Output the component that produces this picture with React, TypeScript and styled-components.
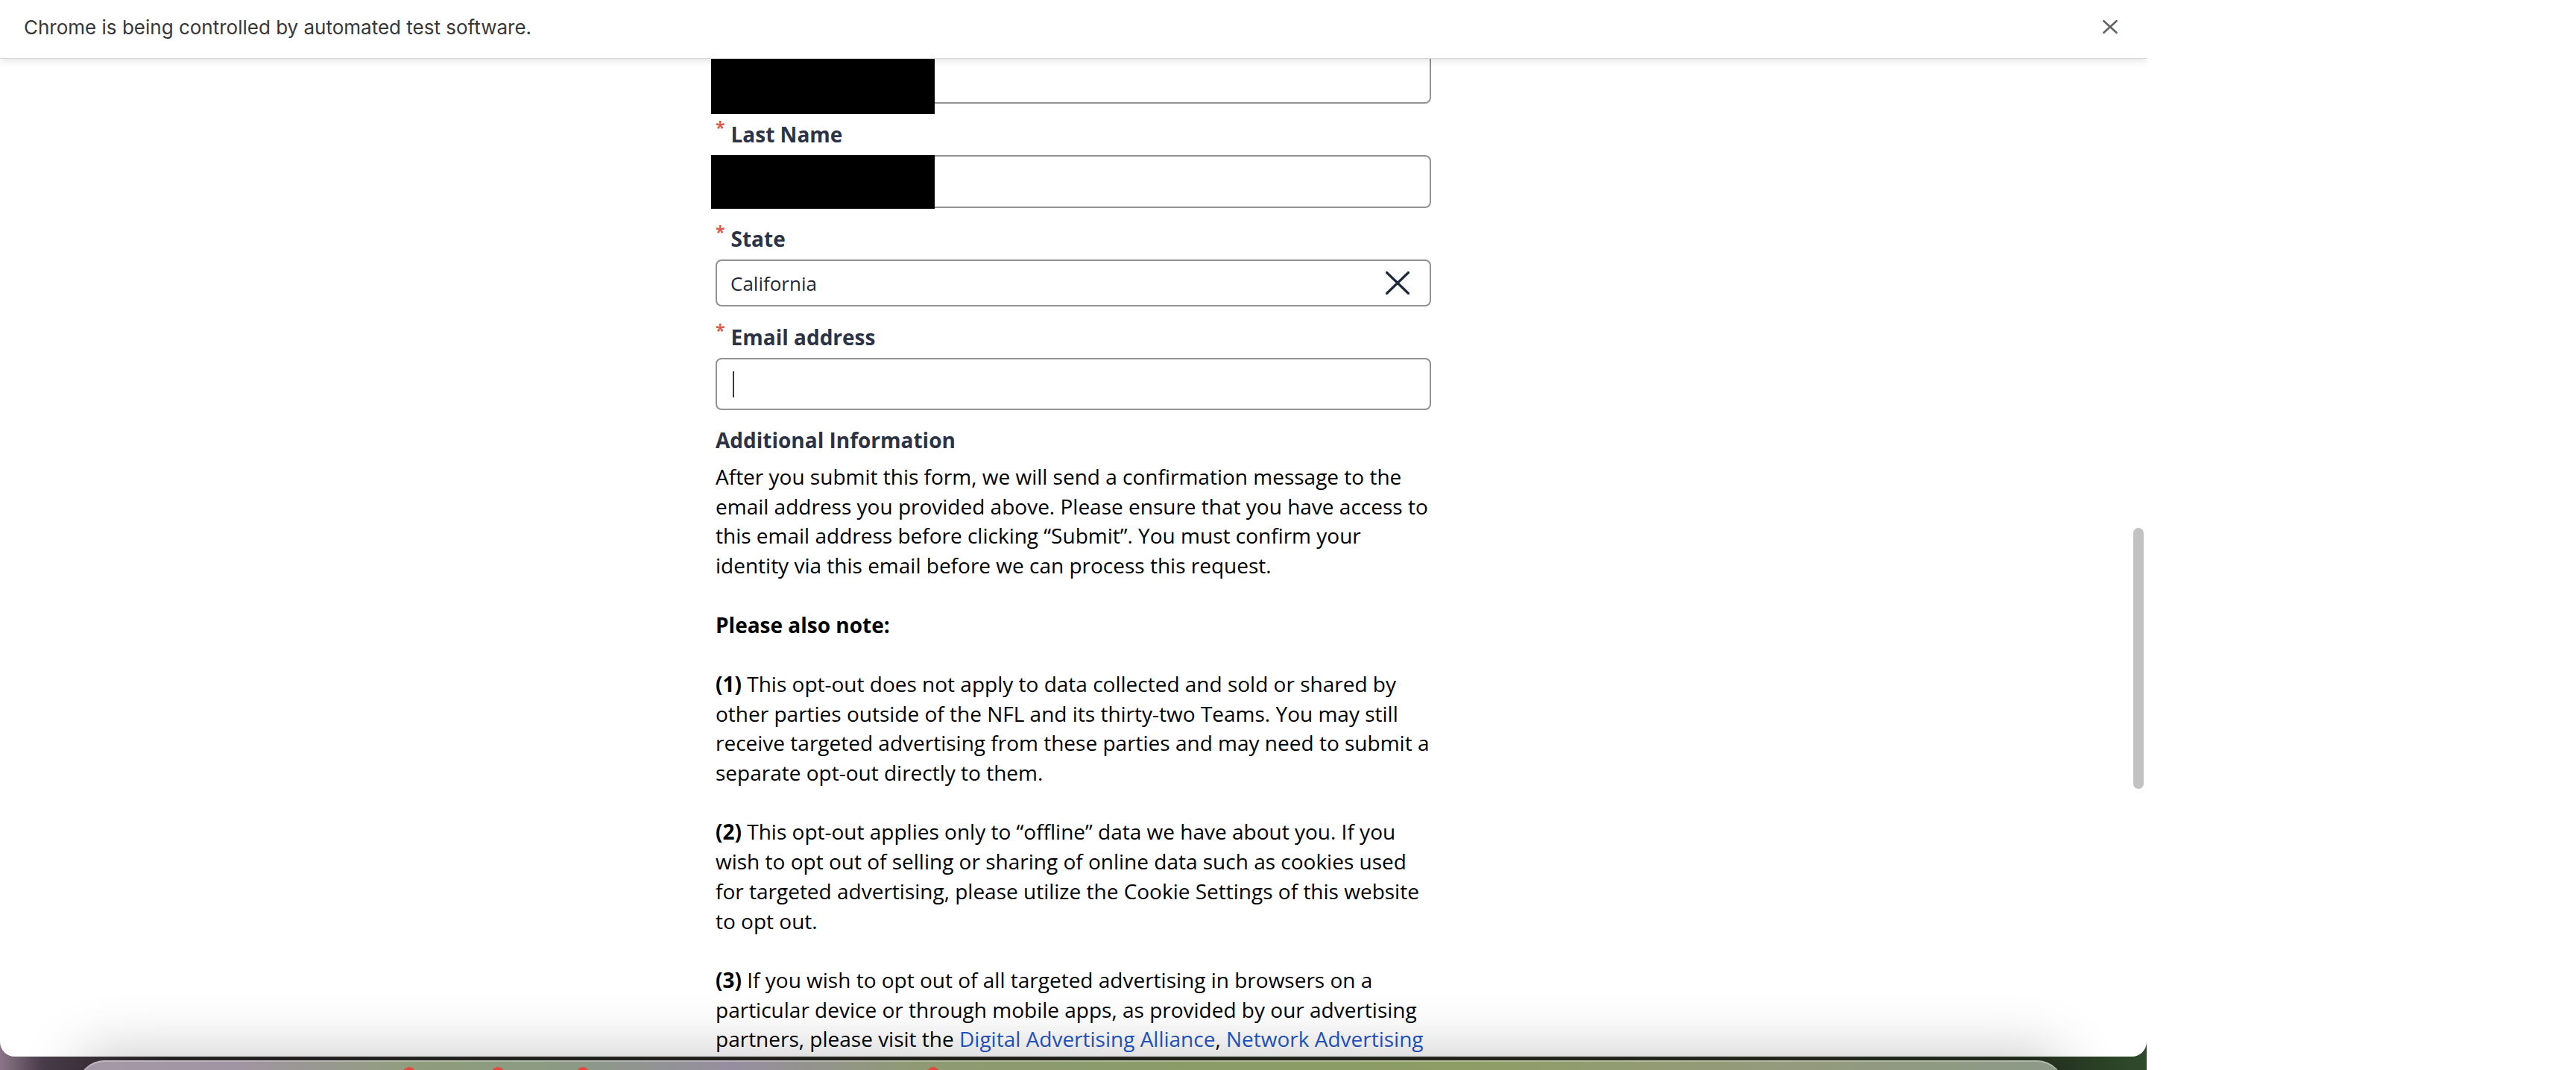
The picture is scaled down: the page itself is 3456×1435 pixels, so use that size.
import React, { useLayoutEffect, useRef } from "react";
import styled, { createGlobalStyle } from "styled-components";

const GlobalStyle = createGlobalStyle`
  html, body {
    margin: 0;
    padding: 0;
    background: #ffffff;
  }
  body {
    width: 3456px;
    height: 1435px;
    overflow: hidden;
    font-family: "Open Sans", "Noto Sans", sans-serif;
  }
`;

const Screen = styled.div`
  display: flex;
  width: 3456px;
  height: 1435px;
  background: #ffffff;
`;

const Desktop = styled.div`
  position: relative;
  flex: none;
  width: 2880px;
  height: 1435px;
  overflow: hidden;
  background: linear-gradient(
    90deg,
    #8a7588 0%,
    #4a3c4a 2%,
    #2a2628 8%,
    #27271f 40%,
    #2a2a20 70%,
    #24301f 94%,
    #2f4b2b 100%
  );
`;

const BrowserWindow = styled.div`
  position: relative;
  display: flex;
  flex-direction: column;
  height: 1417px;
  background: #ffffff;
  border-radius: 0 0 20px 20px;
  overflow: hidden;
`;

const InfoBar = styled.div`
  position: relative;
  z-index: 2;
  flex: none;
  display: flex;
  align-items: center;
  justify-content: space-between;
  box-sizing: border-box;
  height: 78px;
  padding: 0 39px 6px 32px;
  background: #ffffff;
  box-shadow: 0 1px 0 #d4d4d4, 0 3px 10px rgba(0, 0, 0, 0.12);
  font-family: Inter, "Liberation Sans", sans-serif;
  font-size: 26px;
  color: #37373a;
`;

const CloseButton = styled.button`
  display: flex;
  align-items: center;
  justify-content: center;
  width: 20px;
  height: 18px;
  padding: 0;
  border: 0;
  background: transparent;
`;

const Viewport = styled.div`
  position: relative;
  flex: 1;
  min-height: 0;
`;

const Scroller = styled.div`
  height: 100%;
  overflow-y: scroll;
  scrollbar-width: none;
  &::-webkit-scrollbar {
    display: none;
  }
`;

const ScrollThumb = styled.div`
  position: absolute;
  right: 4px;
  top: 630px;
  width: 14px;
  height: 350px;
  border-radius: 7px;
  background: #c2c2c2;
`;

const Column = styled.main`
  width: 960px;
  margin: 0 auto;
  padding: 80px 0 500px;
  font-family: "Open Sans", "Noto Sans", sans-serif;
`;

const Field = styled.div<{ $after?: number }>`
  display: flex;
  flex-direction: column;
  gap: 8px;
  margin-bottom: ${(p) => p.$after ?? 19}px;
`;

const Label = styled.label`
  display: block;
  padding-top: 2px;
  font-size: 28px;
  line-height: 40px;
  font-weight: 700;
  color: #2c3345;
`;

const Required = styled.span`
  display: inline-block;
  margin-right: 8px;
  font-size: 23px;
  line-height: 22px;
  vertical-align: top;
  color: #dc5a50;
`;

const InputBox = styled.div<{ $h: number }>`
  position: relative;
  display: flex;
  align-items: center;
  justify-content: space-between;
  box-sizing: border-box;
  height: ${(p) => p.$h}px;
  padding: 0 27px 0 18px;
  border: 2px solid #929292;
  border-radius: 8px;
  background: #ffffff;
  font-size: 26px;
  color: #1f2937;
`;

const Redaction = styled.div<{ $top: number; $bottom: number }>`
  position: absolute;
  left: -8px;
  top: ${(p) => p.$top}px;
  bottom: ${(p) => p.$bottom}px;
  width: 300px;
  background: #000000;
`;

const Caret = styled.span`
  display: block;
  width: 2px;
  height: 35px;
  margin-left: 3px;
  background: #3a3a3a;
`;

const ClearButton = styled.button`
  display: flex;
  padding: 0;
  border: 0;
  background: transparent;
`;

const SectionTitle = styled.h2`
  margin: 0 0 10px;
  font-size: 28px;
  line-height: 40px;
  font-weight: 700;
  color: #2c3345;
`;

const Paragraph = styled.p`
  margin: 0 0 39.7px;
  font-size: 28px;
  line-height: 39.7px;
  color: #000000;
  white-space: nowrap;
`;

const Link = styled.a`
  color: #2456c6;
  text-decoration: none;
`;

const Dock = styled.div`
  position: absolute;
  z-index: 3;
  left: 104px;
  top: 1422px;
  width: 2665px;
  height: 140px;
  border-radius: 36px;
  background: linear-gradient(
    90deg,
    #a698a6 0%,
    #a095a2 8%,
    #8f9d7c 17%,
    #8b9a83 24%,
    #968ea0 33%,
    #8f9a74 42%,
    #8a9b68 55%,
    #8e9d66 70%,
    #949a7c 85%,
    #8c9a88 100%
  );
  box-shadow: 0 -10px 80px rgba(0, 0, 0, 0.22), inset 0 2px 0 rgba(255, 255, 255, 0.3);
`;

const Badge = styled.span<{ $x: number }>`
  position: absolute;
  top: 9px;
  left: ${(p) => p.$x}px;
  width: 18px;
  height: 18px;
  border-radius: 50%;
  background: #e3493b;
`;

const CloseIcon = () => (
  <svg width="20" height="18" viewBox="0 0 20 18" aria-hidden="true">
    <path d="M1.5 1.2 L18.5 16.8 M18.5 1.2 L1.5 16.8" stroke="#5f6368" strokeWidth="2.6" strokeLinecap="round" fill="none" />
  </svg>
);

const ClearIcon = () => (
  <svg width="32" height="31" viewBox="0 0 32 31" aria-hidden="true">
    <path d="M1.5 1.5 L30.5 29.5 M30.5 1.5 L1.5 29.5" stroke="#1e293b" strokeWidth="3.2" strokeLinecap="round" fill="none" />
  </svg>
);

export default function App() {
  const scrollerRef = useRef<HTMLDivElement>(null);
  const anchorRef = useRef<HTMLDivElement>(null);

  useLayoutEffect(() => {
    const s = scrollerRef.current;
    const a = anchorRef.current;
    if (!s || !a) return;
    const delta = a.getBoundingClientRect().top - s.getBoundingClientRect().top;
    s.scrollTop += delta + 10;
  }, []);

  return (
    <>
      <GlobalStyle />
      <Screen>
        <Desktop>
          <BrowserWindow>
            <InfoBar>
              <span>Chrome is being controlled by automated test software.</span>
              <CloseButton aria-label="Close">
                <CloseIcon />
              </CloseButton>
            </InfoBar>
            <Viewport>
              <Scroller ref={scrollerRef}>
                <Column>
                  <Field>
                    <Label>
                      <Required>*</Required>First Name
                    </Label>
                    <InputBox $h={71} ref={anchorRef}>
                      <Redaction $top={-12} $bottom={-16} />
                    </InputBox>
                  </Field>
                  <Field>
                    <Label>
                      <Required>*</Required>Last Name
                    </Label>
                    <InputBox $h={71}>
                      <Redaction $top={-2} $bottom={-3} />
                    </InputBox>
                  </Field>
                  <Field>
                    <Label>
                      <Required>*</Required>State
                    </Label>
                    <InputBox $h={63}>
                      <span>California</span>
                      <ClearButton aria-label="Clear">
                        <ClearIcon />
                      </ClearButton>
                    </InputBox>
                  </Field>
                  <Field $after={20}>
                    <Label>
                      <Required>*</Required>Email address
                    </Label>
                    <InputBox $h={70}>
                      <Caret />
                    </InputBox>
                  </Field>

                  <SectionTitle>Additional Information</SectionTitle>
                  <Paragraph>
                    After you submit this form, we will send a confirmation message to the
                    <br />
                    email address you provided above. Please ensure that you have access to
                    <br />
                    this email address before clicking “Submit”. You must confirm your
                    <br />
                    identity via this email before we can process this request.
                  </Paragraph>
                  <Paragraph>
                    <strong>Please also note:</strong>
                  </Paragraph>
                  <Paragraph>
                    <strong>(1)</strong> This opt-out does not apply to data collected and sold or shared by
                    <br />
                    other parties outside of the NFL and its thirty-two Teams. You may still
                    <br />
                    receive targeted advertising from these parties and may need to submit a
                    <br />
                    separate opt-out directly to them.
                  </Paragraph>
                  <Paragraph>
                    <strong>(2)</strong> This opt-out applies only to “offline” data we have about you. If you
                    <br />
                    wish to opt out of selling or sharing of online data such as cookies used
                    <br />
                    for targeted advertising, please utilize the Cookie Settings of this website
                    <br />
                    to opt out.
                  </Paragraph>
                  <Paragraph>
                    <strong>(3)</strong> If you wish to opt out of all targeted advertising in browsers on a
                    <br />
                    particular device or through mobile apps, as provided by our advertising
                    <br />
                    partners, please visit the <Link href="#">Digital Advertising Alliance</Link>,{" "}
                    <Link href="#">Network Advertising</Link>
                    <br />
                    <Link href="#">Initiative</Link>, and the app choices tools they provide.
                  </Paragraph>
                </Column>
              </Scroller>
              <ScrollThumb />
            </Viewport>
          </BrowserWindow>
          <Dock>
            <Badge $x={436} />
            <Badge $x={555} />
            <Badge $x={669} />
            <Badge $x={1139} />
          </Dock>
        </Desktop>
      </Screen>
    </>
  );
}
